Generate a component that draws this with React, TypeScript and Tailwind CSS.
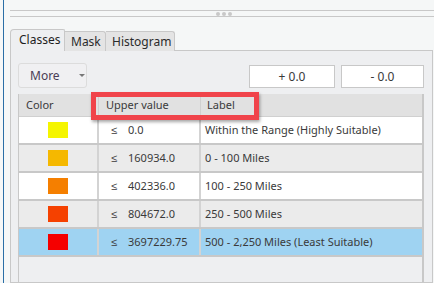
import React from "react";

const rows = [
  { color: "bg-[#f5f500]", value: "0.0", label: "Within the Range (Highly Suitable)", bg: "bg-white" },
  { color: "bg-[#f5b800]", value: "160934.0", label: "0 - 100 Miles", bg: "bg-[#ebebeb]" },
  { color: "bg-[#f57f00]", value: "402336.0", label: "100 - 250 Miles", bg: "bg-white" },
  { color: "bg-[#f54100]", value: "804672.0", label: "250 - 500 Miles", bg: "bg-[#ebebeb]" },
  { color: "bg-[#f50000]", value: "3697229.75", label: "500 - 2,250 Miles (Least Suitable)", bg: "bg-[#9fd3f2]" },
];

export default function App() {
  return (
    <div className="relative w-[434px] h-[283px] overflow-hidden bg-[#f5f7f7] flex text-[11px] text-[#3a3a3a] font-['Noto_Sans',sans-serif]">
      {/* window edge */}
      <div className="w-[3px] shrink-0" />
      <div className="w-px shrink-0 bg-[#2a6ea6]" />

      <div className="flex-1 pl-[6px] flex flex-col">
        {/* splitter */}
        <div className="mt-[10px] h-px bg-[#c8c8c8]" />
        <div className="h-[5px] flex items-center pl-[206px] gap-[2px]">
          <span className="w-[4px] h-[4px] rounded-full bg-[#c8c8c8]" />
          <span className="w-[4px] h-[4px] rounded-full bg-[#c8c8c8]" />
          <span className="w-[4px] h-[4px] rounded-full bg-[#c8c8c8]" />
        </div>
        <div className="h-px bg-[#c8c8c8]" />

        {/* tabs */}
        <div className="mt-[12px] flex items-end relative z-10 -mb-px">
          <div className="h-[22px] w-[55px] border border-b-0 border-[#c8c8c8] rounded-tl-[4px] rounded-tr-[2px] bg-[#eeeff1] flex items-center pl-[8px] pb-[2px] text-[12px] text-[#1e1e1e]">
            Classes
          </div>
          <div className="h-[20px] w-[41px] border border-l-0 border-b-0 border-[#c8c8c8] rounded-tr-[3px] bg-[#e4e4e4] flex items-center pl-[6px] text-[12px] text-[#2b2b2b]">
            Mask
          </div>
          <div className="h-[20px] w-[69px] border border-l-0 border-b-0 border-[#c8c8c8] rounded-tr-[3px] bg-[#e4e4e4] flex items-center pl-[6px] text-[12px] text-[#2b2b2b]">
            Histogram
          </div>
        </div>

        {/* panel */}
        <div className="w-[423px] flex-1 border border-[#c8c8c8] bg-[#eeeff1] pl-[7px] pr-[7px] flex flex-col">
          <div className="mt-[12px] flex items-end">
            <div className="h-[25px] w-[69px] border border-[#dcdcdc] rounded-[3px] bg-[#f0f0f2] flex items-center pl-[11px] text-[12px] text-[#4a3d55]">
              More
              <span className="ml-[19px] w-0 h-0 border-l-[3px] border-r-[3px] border-t-[3px] border-l-transparent border-r-transparent border-t-[#777]" />
            </div>
            <div className="ml-auto h-[23px] w-[86px] border border-[#c8c8c8] bg-white flex items-center justify-center text-[12px]">
              + 0.0
            </div>
            <div className="ml-[6px] mr-[1px] h-[23px] w-[83px] border border-[#c8c8c8] bg-white flex items-center justify-center text-[12px]">
              - 0.0
            </div>
          </div>

          {/* table */}
          <div className="mt-[6px] flex-1 border-l border-r-2 border-[#c8c8c8] bg-[#eeeff1] w-[406px]">
            <div className="h-[23px] flex bg-[#e1e1e1] border-b border-[#d0d0d0]">
              <div className="w-[80px] pl-[7px] flex items-center border-r border-[#d0d0d0]">Color</div>
              <div className="w-[102px] pl-[7px] flex items-center border-r border-[#d0d0d0]">Upper value</div>
              <div className="flex-1 pl-[6px] flex items-center">Label</div>
            </div>
            {rows.map((r) => (
              <div key={r.value} className={`h-[28px] flex border-b-2 border-[#c8c8c8] ${r.bg}`}>
                <div className="w-[80px] flex items-center justify-center border-r-2 border-[#d3d3d3]">
                  <span className={`w-[20px] h-[16px] ${r.color}`} />
                </div>
                <div className="w-[102px] flex items-center pl-[12px] border-r-2 border-[#d3d3d3]">
                  <span className="w-[17px]">≤</span>
                  <span>{r.value}</span>
                </div>
                <div className="flex-1 pl-[4px] flex items-center">{r.label}</div>
              </div>
            ))}
          </div>
        </div>
      </div>

      {/* annotation */}
      <div className="absolute left-[91px] top-[92px] w-[168px] h-[28px] border-[5px] border-[#f0434a] shadow-[1px_2px_3px_rgba(0,0,0,0.35)]" />
    </div>
  );
}
